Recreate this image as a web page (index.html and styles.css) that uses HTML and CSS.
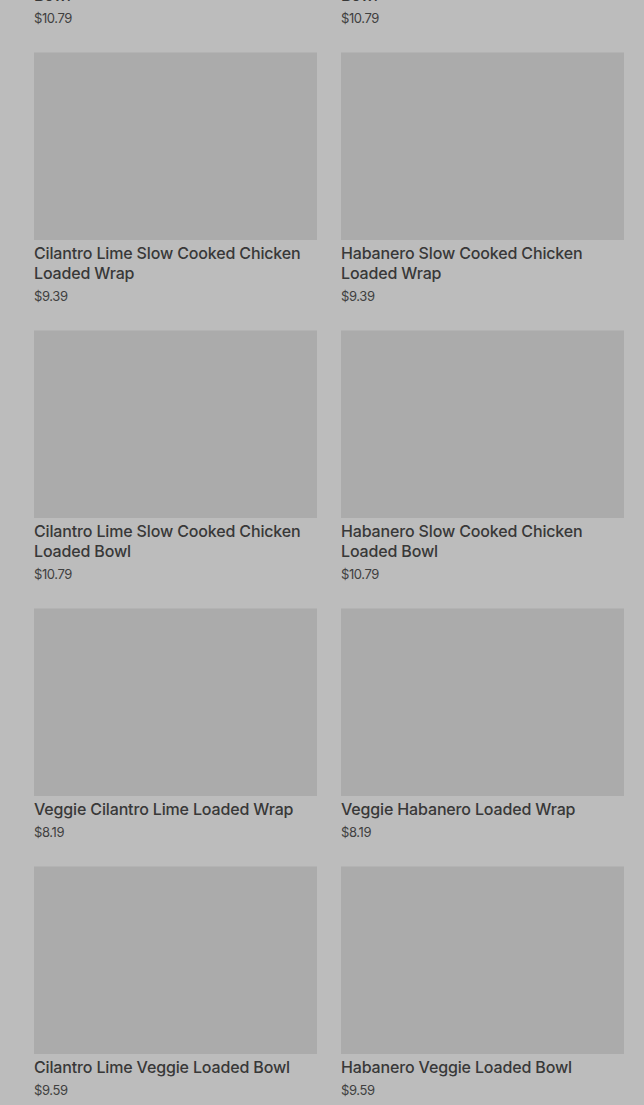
FILE: index.html
```html
<!DOCTYPE html>
<html lang="en">
<head>
    <meta charset="UTF-8">
    <meta name="viewport" content="width=device-width, initial-scale=1.0">
    <title>Menu</title>
    <link rel="stylesheet" href="styles.css">
</head>
<body>
    <div class="menu">
        <div class="item">
            <div class="foto"></div>
            <div class="nombre">Cilantro Lime Slow Cooked Chicken Bowl</div>
            <div class="precio">$10.79</div>
        </div>
        <div class="item">
            <div class="foto"></div>
            <div class="nombre">Habanero Slow Cooked Chicken Rice Bowl</div>
            <div class="precio">$10.79</div>
        </div>
        <div class="item">
            <div class="foto"></div>
            <div class="nombre">Cilantro Lime Slow Cooked Chicken Loaded Wrap</div>
            <div class="precio">$9.39</div>
        </div>
        <div class="item">
            <div class="foto"></div>
            <div class="nombre">Habanero Slow Cooked Chicken Loaded Wrap</div>
            <div class="precio">$9.39</div>
        </div>
        <div class="item">
            <div class="foto"></div>
            <div class="nombre">Cilantro Lime Slow Cooked Chicken Loaded Bowl</div>
            <div class="precio">$10.79</div>
        </div>
        <div class="item">
            <div class="foto"></div>
            <div class="nombre">Habanero Slow Cooked Chicken Loaded Bowl</div>
            <div class="precio">$10.79</div>
        </div>
        <div class="item">
            <div class="foto"></div>
            <div class="nombre">Veggie Cilantro Lime Loaded Wrap</div>
            <div class="precio">$8.19</div>
        </div>
        <div class="item">
            <div class="foto"></div>
            <div class="nombre">Veggie Habanero Loaded Wrap</div>
            <div class="precio">$8.19</div>
        </div>
        <div class="item">
            <div class="foto"></div>
            <div class="nombre">Cilantro Lime Veggie Loaded Bowl</div>
            <div class="precio">$9.59</div>
        </div>
        <div class="item">
            <div class="foto"></div>
            <div class="nombre">Habanero Veggie Loaded Bowl</div>
            <div class="precio">$9.59</div>
        </div>
    </div>
</body>
</html>
```

FILE: styles.css
```css
body {
    margin: 0;
    background-color: #bcbcbc;
    font-family: Inter, "Noto Sans", sans-serif;
    overflow: hidden;
    height: 1105px;
}
.menu {
    display: grid;
    grid-template-columns: 1fr 1fr;
    column-gap: 24px;
    row-gap: 25px;
    padding: 0 20px 0 34px;
    margin-top: -226px;
}
.foto {
    height: 188px;
    background: #ababab;
    border-top: 1px solid #b3b3b3;
    box-sizing: border-box;
}
.nombre {
    margin-top: 3px;
    font-size: 16px;
    line-height: 20px;
    font-weight: 500;
    letter-spacing: -0.15px;
    color: #383838;
}
.precio {
    margin-top: 4px;
    font-size: 13px;
    line-height: 18px;
    color: #404040;
    letter-spacing: -0.4px;
}
```
